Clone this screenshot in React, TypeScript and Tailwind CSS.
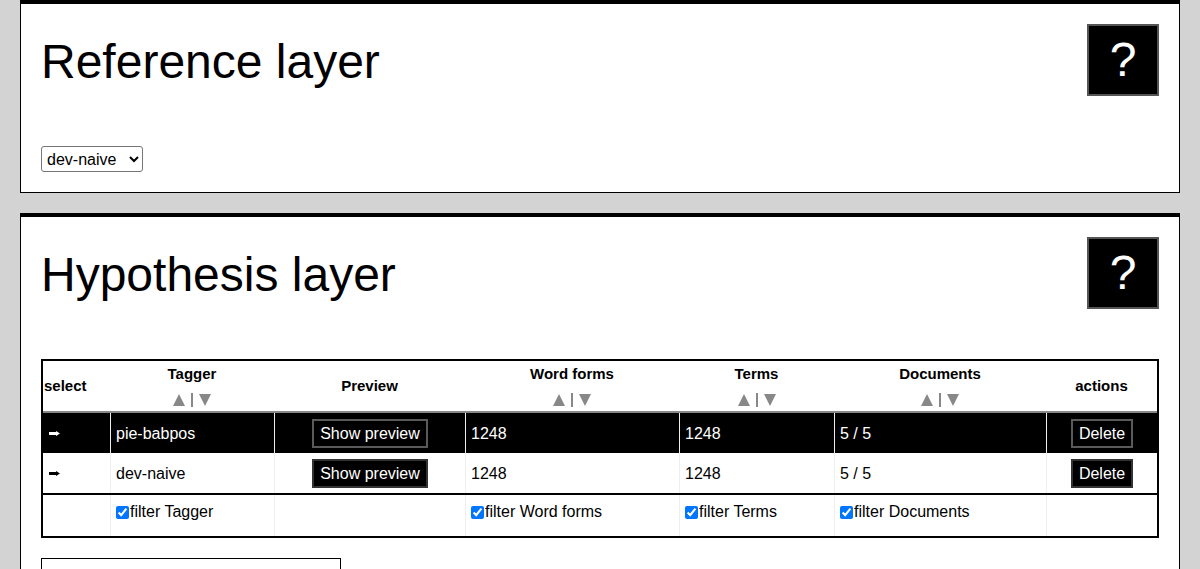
import React from "react";

const cols = "grid grid-cols-[67px_164px_191px_214px_155px_212px_111px]";

function HelpBox() {
  return (
    <div className="w-[72px] h-[72px] bg-black border-2 border-[#555] flex items-center justify-center text-white text-[48px] leading-none">
      ?
    </div>
  );
}

function Card({ title, children }: { title: string; children: React.ReactNode }) {
  return (
    <section className="bg-white border border-black border-t-4 p-[20px] mb-[20px]">
      <div className="flex items-center justify-between h-[72px] mb-[50px]">
        <h1 className="text-[48px] font-normal leading-normal text-black pt-[4px]">{title}</h1>
        <HelpBox />
      </div>
      {children}
    </section>
  );
}

function SortArrows() {
  return (
    <div className="flex items-center gap-[6px] mt-[11px] h-[14px]">
      <svg width="12" height="12" viewBox="0 0 12 12">
        <path d="M6 0 L12 12 H0 Z" fill="#888" />
      </svg>
      <div className="w-[2px] h-[14px] bg-[#888]" />
      <svg width="12" height="12" viewBox="0 0 12 12">
        <path d="M0 0 H12 L6 12 Z" fill="#888" />
      </svg>
    </div>
  );
}

function RowArrow({ color }: { color: string }) {
  return (
    <svg width="11" height="5" viewBox="0 0 11 5">
      <path d="M0 1 H7 V0 L11 2.5 L7 5 V4 H0 Z" fill={color} />
    </svg>
  );
}

function SortHeader({ label }: { label: string }) {
  return (
    <div className="flex flex-col items-center pt-[4px]">
      <span className="text-[15px] font-bold leading-[17px]">{label}</span>
      <SortArrows />
    </div>
  );
}

function Btn({ children, dark }: { children: React.ReactNode; dark: boolean }) {
  return (
    <button
      className={
        dark
          ? "h-[29px] px-[6px] bg-black text-white border-2 border-[#5a5a5a] text-[16px] leading-none"
          : "h-[29px] px-[6px] bg-black text-white border-2 border-[#333] text-[16px] leading-none"
      }
    >
      {children}
    </button>
  );
}

const rows = [
  { name: "pie-babpos", words: "1248", terms: "1248", docs: "5 / 5", selected: true },
  { name: "dev-naive", words: "1248", terms: "1248", docs: "5 / 5", selected: false },
];

function LayerTable() {
  return (
    <div className="border-2 border-black text-[16px]">
      <div className={`${cols} h-[52px] border-b-2 border-[#888]`}>
        <div className="flex items-center pl-[1px] pt-[1px] text-[15px] font-bold">select</div>
        <SortHeader label="Tagger" />
        <div className="flex items-center justify-center pt-[1px] text-[15px] font-bold">Preview</div>
        <SortHeader label="Word forms" />
        <SortHeader label="Terms" />
        <SortHeader label="Documents" />
        <div className="flex items-center justify-center pt-[1px] text-[15px] font-bold">actions</div>
      </div>

      {rows.map((r) => (
        <div
          key={r.name}
          className={`${cols} h-[40px] ${r.selected ? "bg-black text-white" : "bg-white text-black"}`}
        >
          <div className="flex items-center pl-[6px]">
            <RowArrow color={r.selected ? "#fff" : "#000"} />
          </div>
          <div className="flex items-center px-[5px] pt-[2px] border-l border-[#eee]">{r.name}</div>
          <div className="flex items-center justify-center pt-[1px] border-l border-[#eee]">
            <Btn dark={r.selected}>Show preview</Btn>
          </div>
          <div className="flex items-center px-[5px] pt-[2px] border-l border-[#eee]">{r.words}</div>
          <div className="flex items-center px-[5px] pt-[2px] border-l border-[#eee]">{r.terms}</div>
          <div className="flex items-center px-[5px] pt-[2px] border-l border-[#eee]">{r.docs}</div>
          <div className="flex items-center justify-center pt-[1px] border-l border-[#eee]">
            <Btn dark={r.selected}>Delete</Btn>
          </div>
        </div>
      ))}

      <div className={`${cols} h-[43px] border-t-2 border-black`}>
        <div />
        <FilterCell label="filter Tagger" />
        <div className="border-l border-[#eee]" />
        <FilterCell label="filter Word forms" />
        <FilterCell label="filter Terms" />
        <FilterCell label="filter Documents" />
        <div className="border-l border-[#eee]" />
      </div>
    </div>
  );
}

function FilterCell({ label }: { label: string }) {
  return (
    <div className="border-l border-[#eee] px-[5px] pt-[8px]">
      <label className="flex items-center leading-[18px]">
        <input type="checkbox" defaultChecked className="w-[13px] h-[13px] m-0 mr-[1px]" />
        {label}
      </label>
    </div>
  );
}

export default function App() {
  return (
    <div className="min-h-screen bg-[#d3d3d3] px-[20px] font-['Liberation_Sans',Arial,sans-serif] text-black">
      <Card title="Reference layer">
        <select
          defaultValue="dev-naive"
          className="w-[102px] h-[26px] border border-[#767676] rounded-[3px] bg-white text-[16px] pl-[1px]"
        >
          <option value="dev-naive">dev-naive</option>
          <option value="pie-babpos">pie-babpos</option>
        </select>
      </Card>

      <Card title="Hypothesis layer">
        <LayerTable />
        <div className="w-[300px] h-[40px] border border-black mt-[20px]" />
      </Card>
    </div>
  );
}
